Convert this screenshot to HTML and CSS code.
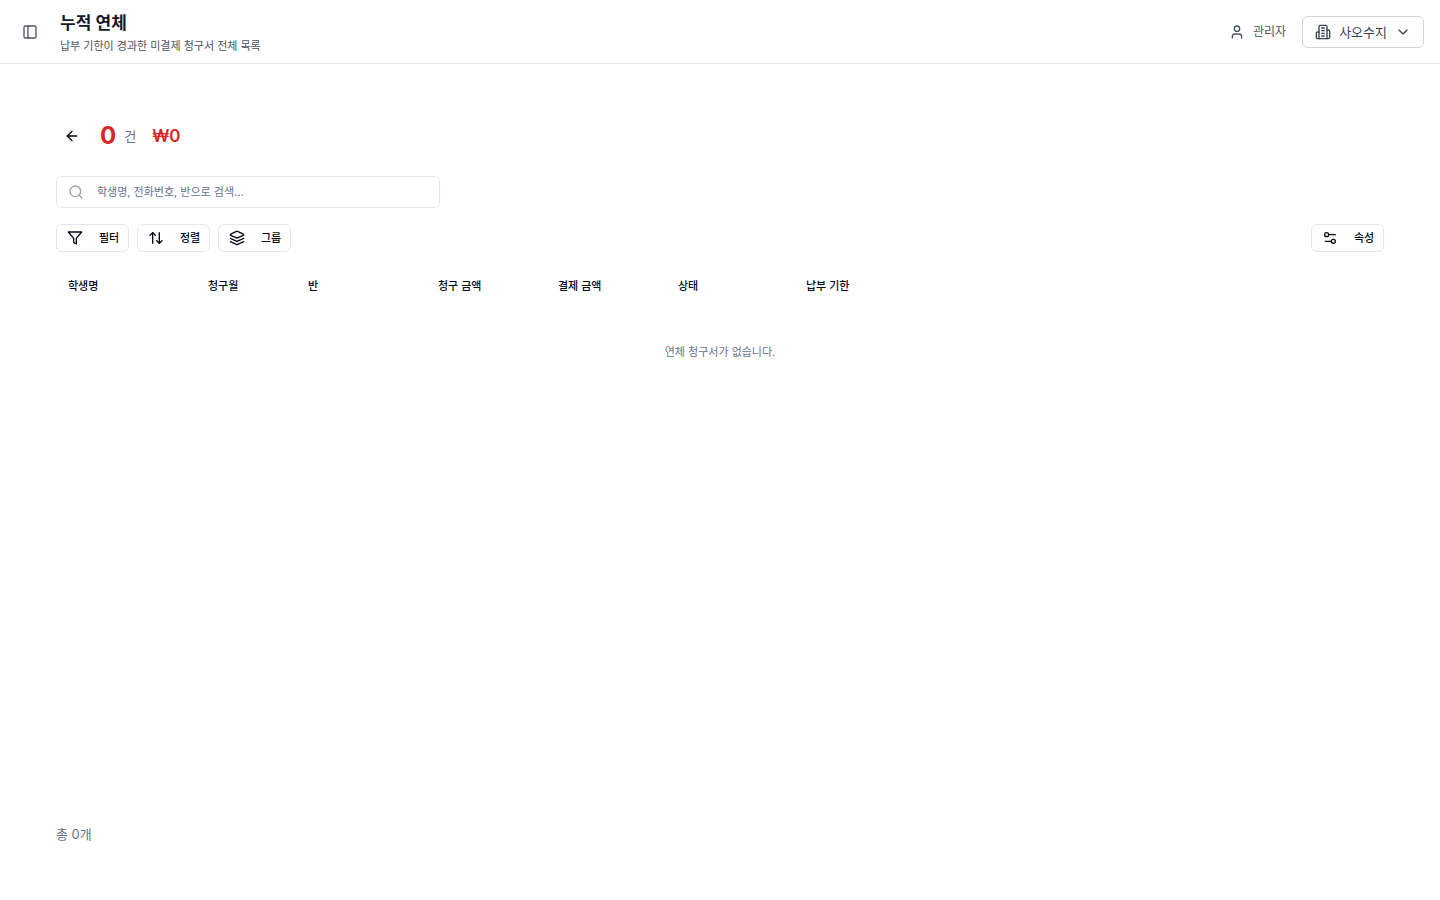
FILE: index.html
```html
<!DOCTYPE html>
<html lang="ko">
<head>
<meta charset="utf-8">
<meta name="viewport" content="width=device-width, initial-scale=1">
<title>누적 연체</title>
<link rel="stylesheet" href="styles.css">
</head>
<body>
<header class="topbar">
  <button class="icon-button muted" type="button" aria-label="사이드바 열기">
    <svg class="icon" viewBox="0 0 24 24"><rect width="18" height="18" x="3" y="3" rx="2"/><path d="M9 3v18"/></svg>
  </button>
  <div class="heading">
    <h1 class="title">누적 연체</h1>
    <p class="subtitle">납부 기한이 경과한 미결제 청구서 전체 목록</p>
  </div>
  <div class="account">
    <div class="user">
      <svg class="icon" viewBox="0 0 24 24"><path d="M19 21v-2a4 4 0 0 0-4-4H9a4 4 0 0 0-4 4v2"/><circle cx="12" cy="7" r="4"/></svg>
      <span>관리자</span>
    </div>
    <button class="branch" type="button">
      <svg class="icon" viewBox="0 0 24 24"><path d="M6 22V4a2 2 0 0 1 2-2h8a2 2 0 0 1 2 2v18Z"/><path d="M6 12H4a2 2 0 0 0-2 2v6a2 2 0 0 0 2 2h2"/><path d="M18 9h2a2 2 0 0 1 2 2v9a2 2 0 0 1-2 2h-2"/><path d="M10 6h4"/><path d="M10 10h4"/><path d="M10 14h4"/><path d="M10 18h4"/></svg>
      <span>사오수지</span>
      <svg class="icon" viewBox="0 0 24 24"><path d="m6 9 6 6 6-6"/></svg>
    </button>
  </div>
</header>
<main class="content">
  <div class="summary">
    <button class="icon-button" type="button" aria-label="뒤로">
      <svg class="icon" viewBox="0 0 24 24"><path d="m12 19-7-7 7-7"/><path d="M19 12H5"/></svg>
    </button>
    <p class="count"><strong class="count-value">0</strong><span class="count-unit">건</span></p>
    <p class="amount">₩0</p>
  </div>
  <label class="search">
    <svg class="icon" viewBox="0 0 24 24"><circle cx="11" cy="11" r="8"/><path d="m21 21-4.3-4.3"/></svg>
    <input class="search-input" type="text" aria-label="검색" placeholder="학생명, 전화번호, 반으로 검색...">
  </label>
  <div class="toolbar">
    <button class="tool" type="button">
      <svg class="icon" viewBox="0 0 24 24"><path d="M22 3H2l8 9.460V19l4 2v-8.540L22 3z"/></svg>
      <span>필터</span>
    </button>
    <button class="tool" type="button">
      <svg class="icon" viewBox="0 0 24 24"><path d="m3 8 4-4 4 4"/><path d="M7 4v16"/><path d="m21 16-4 4-4-4"/><path d="M17 20V4"/></svg>
      <span>정렬</span>
    </button>
    <button class="tool" type="button">
      <svg class="icon" viewBox="0 0 24 24"><path d="m12.830 2.180a2 2 0 0 0-1.660 0L2.600 6.080a1 1 0 0 0 0 1.830l8.580 3.910a2 2 0 0 0 1.660 0l8.580-3.900a1 1 0 0 0 0-1.830Z"/><path d="m22 12.500-9.170 4.160a2 2 0 0 1-1.660 0L2 12.500"/><path d="m22 17.500-9.170 4.160a2 2 0 0 1-1.660 0L2 17.500"/></svg>
      <span>그룹</span>
    </button>
    <button class="tool tool-end" type="button">
      <svg class="icon" viewBox="0 0 24 24"><path d="M20 7h-9"/><path d="M14 17H5"/><circle cx="17" cy="17" r="3"/><circle cx="7" cy="7" r="3"/></svg>
      <span>속성</span>
    </button>
  </div>
  <table class="invoices">
    <colgroup><col class="col-name"><col class="col-month"><col class="col-class"><col class="col-money"><col class="col-money"><col class="col-status"><col></colgroup>
    <thead>
      <tr><th>학생명</th><th>청구월</th><th>반</th><th>청구 금액</th><th>결제 금액</th><th>상태</th><th>납부 기한</th></tr>
    </thead>
    <tbody>
      <tr><td class="empty" colspan="7">연체 청구서가 없습니다.</td></tr>
    </tbody>
  </table>
  <p class="total">총 0개</p>
</main>
</body>
</html>
```
FILE: styles.css
```css
* { box-sizing: border-box; }
body {
  margin: 0;
  min-height: 100vh;
  display: flex;
  flex-direction: column;
  background: #fff;
  color: #020817;
  font: 13px/20px Inter, "Noto Sans CJK KR", sans-serif;
}
h1, p { margin: 0; }
button, input { font: inherit; color: inherit; }
button { background: #fff; padding: 0; border: 0; cursor: pointer; }
.icon {
  width: 16px;
  height: 16px;
  flex: none;
  fill: none;
  stroke: currentColor;
  stroke-width: 2;
  stroke-linecap: round;
  stroke-linejoin: round;
}
.topbar {
  height: 64px;
  display: flex;
  align-items: center;
  padding: 0 16px 0 14px;
  border-bottom: 1px solid #e5e7eb;
}
.icon-button {
  width: 32px;
  height: 32px;
  display: grid;
  place-items: center;
}
.muted { color: #4b5563; }
.heading { margin-left: 14px; }
.title { font-size: 17px; line-height: 28px; font-weight: 600; color: #111827; }
.subtitle { font-size: 11px; line-height: 18px; color: #4b5563; }
.account { margin-left: auto; display: flex; align-items: center; gap: 16px; }
.user { display: flex; align-items: center; gap: 8px; font-size: 12px; color: #4b5563; }
.branch {
  height: 32px;
  display: flex;
  align-items: center;
  gap: 8px;
  padding: 0 12px;
  border: 1px solid #d1d5db;
  border-radius: 6px;
  color: #374151;
}
.content {
  flex: 1;
  display: flex;
  flex-direction: column;
  padding: 56px;
}
.summary { display: flex; align-items: center; height: 32px; gap: 12px; }
.count { display: flex; align-items: center; gap: 8px; }
.count-value { font-size: 24px; line-height: 32px; font-weight: 700; color: #dc2626; }
.count-unit { color: #64748b; }
.amount { margin-left: 4px; font-size: 17px; line-height: 28px; font-weight: 600; color: #dc2626; }
.search {
  width: 384px;
  max-width: 100%;
  height: 32px;
  display: flex;
  align-items: center;
  gap: 13px;
  margin-top: 24px;
  padding: 0 12px 0 11px;
  border: 1px solid #e2e8f0;
  border-radius: 6px;
  color: #9ca3af;
}
.search-input {
  flex: 1;
  min-width: 0;
  border: 0;
  outline: 0;
  padding: 0;
  background: transparent;
  font-size: 11px;
  line-height: 16px;
  color: #020817;
}
.search-input::placeholder { color: #64748b; opacity: 1; }
.toolbar { display: flex; flex-wrap: wrap; gap: 8px; margin-top: 16px; }
.tool {
  width: 73px;
  height: 28px;
  display: flex;
  align-items: center;
  gap: 16px;
  padding: 0 8px 0 10px;
  border: 1px solid #e2e8f0;
  border-radius: 6px;
  font-size: 11px;
  line-height: 16px;
  font-weight: 500;
  white-space: nowrap;
}
.tool-end { margin-left: auto; }
.invoices {
  width: 100%;
  margin-top: 16px;
  border-collapse: collapse;
  table-layout: fixed;
  font-size: 11px;
  line-height: 16px;
}
.invoices th { height: 36px; padding: 0 12px; text-align: left; font-weight: 500; }
.col-name { width: 140px; }
.col-month { width: 100px; }
.col-class { width: 130px; }
.col-money { width: 120px; }
.col-status { width: 128px; }
.invoices .empty { height: 96px; padding: 0; text-align: center; color: #64748b; }
.total { margin-top: auto; color: #64748b; }
```
